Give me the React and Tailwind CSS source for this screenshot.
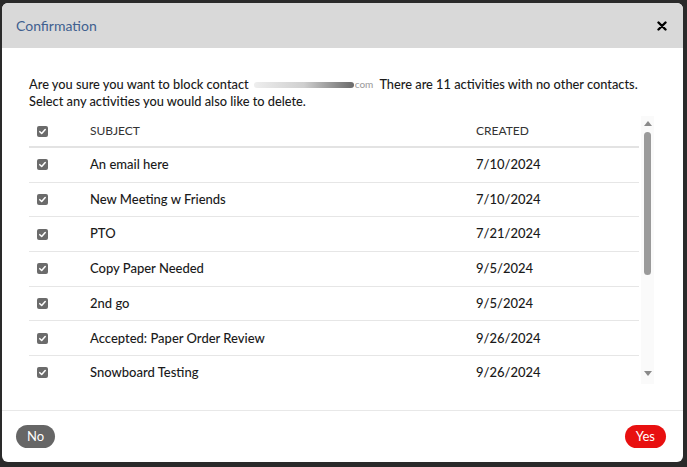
import React from "react";

const rows = [
  ["An email here", "7/10/2024"],
  ["New Meeting w Friends", "7/10/2024"],
  ["PTO", "7/21/2024"],
  ["Copy Paper Needed", "9/5/2024"],
  ["2nd go", "9/5/2024"],
  ["Accepted: Paper Order Review", "9/26/2024"],
  ["Snowboard Testing", "9/26/2024"],
];

function Check() {
  return (
    <span className="w-[11px] h-[11px] rounded-[2px] bg-[#6b6b6b] flex items-center justify-center">
      <svg width="9" height="9" viewBox="0 0 10 10">
        <path d="M2 5.2 L4.1 7.2 L8 2.8" fill="none" stroke="white" strokeWidth="1.7" strokeLinecap="round" strokeLinejoin="round" />
      </svg>
    </span>
  );
}

export default function App() {
  return (
    <div
      className="w-[687px] h-[467px] bg-[#2a2a2a] pt-[3px] pl-[2px]"
      style={{ fontFamily: "Lato, 'Open Sans', sans-serif" }}
    >
      <div className="w-[681px] h-[459px] bg-white rounded-[6px] overflow-hidden flex flex-col">
        <div className="h-[45px] bg-[#d9d9d9] flex items-center justify-between pl-[14px] pr-[16px] shrink-0">
          <span className="text-[14px] text-[#40608f]">Confirmation</span>
          <svg width="10" height="10" viewBox="0 0 10 10">
            <path d="M1.5 1.5 L8.5 8.5 M8.5 1.5 L1.5 8.5" stroke="black" strokeWidth="2.4" strokeLinecap="round" />
          </svg>
        </div>
        <div className="pl-[27px] pr-[30px] pt-[28px] text-[12.8px] leading-[17px] text-[#1a1a1a] font-medium">
          <p className="whitespace-nowrap flex items-center">
            <span>Are you sure you want to block contact</span>
            <span className="inline-flex items-center ml-[5px] mr-[6px]">
              <span className="w-[100px] h-[6px] rounded-full bg-gradient-to-r from-[#eeeeee] via-[#cfcfcf] to-[#6a6a6a] blur-[0.6px]" />
              <span className="text-[10px] text-[#a0a0a0] ml-[1px]">com</span>
            </span>
            <span>There are 11 activities with no other contacts.</span>
          </p>
          <p>Select any activities you would also like to delete.</p>
        </div>
        <div className="flex pl-[27px] mt-[6px] h-[268px]">
          <div className="w-[610px] overflow-hidden text-[13px] text-[#1a1a1a] font-medium">
            <div className="h-[32px] flex items-center border-b-2 border-[#e3e3e3] text-[12px] text-[#333] font-normal">
              <div className="w-[61px] pl-[8px] flex"><Check /></div>
              <div className="w-[386px]">SUBJECT</div>
              <div>CREATED</div>
            </div>
            {rows.map((r, i) => (
              <div key={i} className="h-[34.7px] flex items-center border-b border-[#e6e6e6]">
                <div className="w-[61px] pl-[8px] flex"><Check /></div>
                <div className="w-[386px]">{r[0]}</div>
                <div>{r[1]}</div>
              </div>
            ))}
          </div>
          <div className="w-[13px] ml-[2px] bg-[#fafafa] flex flex-col items-center">
            <svg width="10" height="12" viewBox="0 0 10 12" className="mt-[2px]">
              <path d="M1 8 L5 3 L9 8 Z" fill="#8a8a8a" />
            </svg>
            <div className="w-[7px] h-[143px] bg-[#9a9a9a] rounded-full mt-[2px]" />
            <div className="flex-1" />
            <svg width="10" height="12" viewBox="0 0 10 12" className="mb-[5px]">
              <path d="M1 4 L5 9 L9 4 Z" fill="#8a8a8a" />
            </svg>
          </div>
        </div>
        <div className="mt-auto h-[52px] border-t border-[#e8e8e8] flex items-center justify-between pl-[14px] pr-[17px]">
          <button className="h-[23px] px-[11px] rounded-full bg-[#666] text-white text-[13px]">No</button>
          <button className="h-[23px] px-[11px] rounded-full bg-[#e81010] text-white text-[13px]">Yes</button>
        </div>
      </div>
    </div>
  );
}
